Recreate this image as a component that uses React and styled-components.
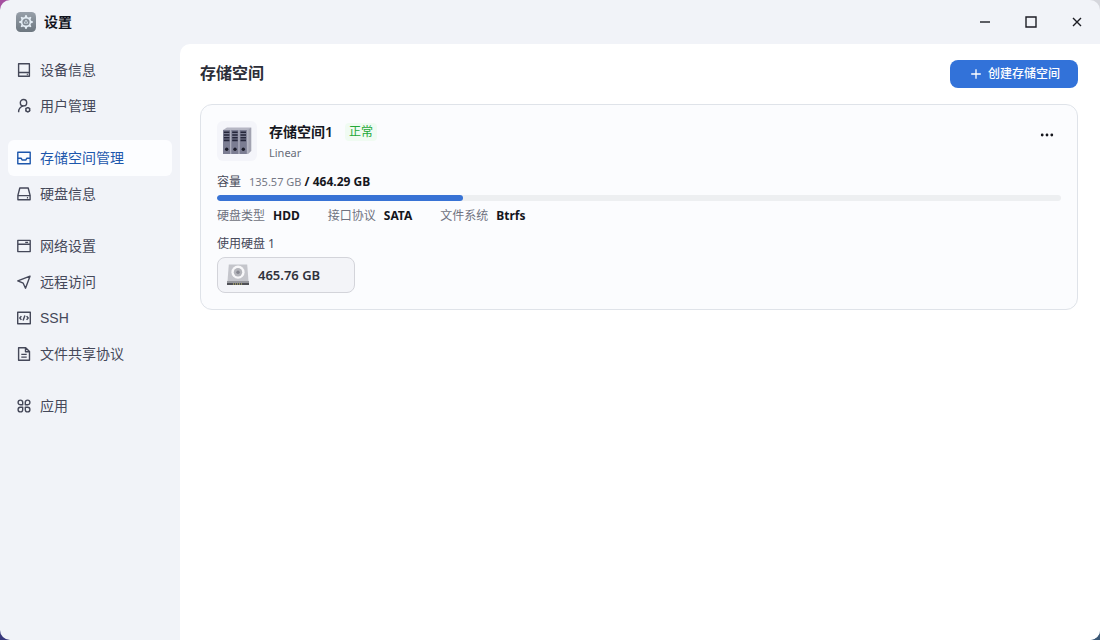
import React from "react";
import styled, { createGlobalStyle } from "styled-components";

const ui = `"Liberation Sans", "Noto Sans CJK SC", sans-serif`;
const latin = `"Noto Sans", "Noto Sans CJK SC", sans-serif`;

const GlobalStyle = createGlobalStyle`
  * { box-sizing: border-box; }
  body { margin: 0; font-family: ${ui}; font-size: 14px; color: #1b1d28; background: #fff; }
  button { font: inherit; color: inherit; border: 0; padding: 0; background: none; cursor: pointer; }
  h1, h2, p, ul, dl, dd { margin: 0; padding: 0; }
`;

const Desktop = styled.div`
  min-height: 100vh;
  display: flex;
  background: linear-gradient(180deg, #a54fa0 0, #a54fa0 20px, #38387c 60px, #38387c 100%) left / 50% 100% no-repeat,
    linear-gradient(180deg, #d5d6dc 0, #d5d6dc 20px, #3b5876 60px, #3b5876 100%);
`;

const Window = styled.div`
  flex: 1;
  display: flex;
  flex-direction: column;
  background: #f1f3f8;
  border-radius: 10px;
  overflow: hidden;
`;

const TitleBar = styled.header`
  height: 44px;
  display: flex;
  align-items: center;
  justify-content: space-between;
  padding-left: 16px;
`;

const AppTitle = styled.h1`
  display: flex;
  align-items: center;
  gap: 8px;
  font-size: 14px;
  line-height: 20px;
  font-weight: 700;
  color: #11131d;
  svg { display: block; }
`;

const WindowControls = styled.div`
  display: flex;
`;

const WindowButton = styled.button`
  width: 46px;
  height: 44px;
  display: grid;
  place-items: center;
  color: #1c1d24;
`;

const Body = styled.div`
  flex: 1;
  display: flex;
`;

const Sidebar = styled.nav`
  width: 180px;
  flex: none;
  padding: 8px;
  display: flex;
  flex-direction: column;
  gap: 16px;
`;

const NavGroup = styled.ul`
  list-style: none;
`;

const NavLink = styled.a`
  height: 36px;
  display: flex;
  align-items: center;
  gap: 8px;
  padding: 0 8px;
  border-radius: 6px;
  font-size: 14px;
  line-height: 20px;
  text-decoration: none;
  color: ${(p) => (p.$active ? "#1d57ac" : "#454859")};
  background: ${(p) => (p.$active ? "#fcfdff" : "transparent")};
`;

const Main = styled.main`
  flex: 1;
  min-width: 0;
  padding: 16px 22px 16px 20px;
  background: #fff;
  border-top-left-radius: 10px;
`;

const PageHead = styled.div`
  display: flex;
  align-items: center;
  justify-content: space-between;
  margin-bottom: 16px;
`;

const PageTitle = styled.h2`
  font-size: 16px;
  line-height: 24px;
  font-weight: 700;
  color: #2c2e38;
`;

const CreateButton = styled.button`
  height: 28px;
  display: flex;
  align-items: center;
  gap: 6px;
  padding: 0 18px 0 20px;
  border-radius: 8px;
  background: #3272d9;
  color: #fff;
  font-size: 12px;
  line-height: 18px;
  font-weight: 500;
`;

const Card = styled.section`
  padding: 16px;
  border: 1px solid #dfe3e9;
  border-radius: 12px;
  background: #fbfcfe;
`;

const CardHead = styled.div`
  display: flex;
  align-items: flex-start;
  gap: 12px;
  margin-bottom: 10px;
`;

const PoolIcon = styled.div`
  width: 40px;
  height: 40px;
  display: grid;
  place-items: center;
  border-radius: 6px;
  background: #f4f5fa;
`;

const PoolText = styled.div`
  flex: 1;
`;

const PoolName = styled.h3`
  margin: 0;
  display: flex;
  align-items: center;
  gap: 12px;
  font-family: ${latin};
  font-size: 14px;
  line-height: 22px;
  font-weight: 600;
  color: #151721;
`;

const Status = styled.span`
  padding: 0 4px;
  border-radius: 4px;
  background: #f0fbf2;
  color: #24a838;
  font-size: 12px;
  line-height: 18px;
  font-weight: 400;
`;

const PoolMode = styled.p`
  font-family: ${latin};
  font-size: 11px;
  line-height: 20px;
  color: #686c78;
`;

const MoreButton = styled.button`
  width: 28px;
  height: 28px;
  display: grid;
  place-items: center;
  color: #15161c;
`;

const InfoLine = styled.p`
  display: flex;
  align-items: center;
  gap: ${(p) => p.$gap || 0}px;
  font-family: ${latin};
  font-size: 12px;
  line-height: 18px;
  color: #454859;
`;

const Used = styled.span`
  font-size: 11px;
  color: #767986;
`;

const Total = styled.strong`
  font-weight: 700;
  color: #15161c;
`;

const Track = styled.div`
  height: 6px;
  margin: 4px 0 6px;
  border-radius: 3px;
  background: #edeff1;
  overflow: hidden;
`;

const Fill = styled.div`
  height: 100%;
  border-radius: 3px;
  background: #3873d5;
`;

const Specs = styled.dl`
  display: flex;
  gap: 28px;
  margin-bottom: 10px;
  font-family: ${latin};
  font-size: 12px;
  line-height: 18px;
`;

const Spec = styled.div`
  display: flex;
  gap: 8px;
  dt { color: #6f7280; }
  dd { font-weight: 700; color: #15161c; }
`;

const Disk = styled.button`
  width: 138px;
  height: 36px;
  margin-top: 4px;
  display: flex;
  align-items: center;
  gap: 8px;
  padding: 0 8px;
  border: 1px solid #d3d4da;
  border-radius: 8px;
  background: #f3f4f8;
  font-family: ${latin};
  font-size: 13px;
  line-height: 20px;
  font-weight: 600;
  color: #30323b;
`;

const glyphs = {
  device: <><path d="M2.6 1.7h10.8v12.6H2.6z" /><path d="M2.6 10.5h10.8M10.8 12.5h1" /></>,
  user: <><circle cx="7.5" cy="4.7" r="3.2" /><path d="M2.6 14.2c0-3.4 1.9-5.6 4.9-6.3" /><circle cx="11.8" cy="11.7" r="1.9" /><path d="M11.8 9v.9M11.8 13.5v.9M9.4 10.3l.8.5M13.4 12.6l.8.5M14.2 10.3l-.8.5M10.2 12.6l-.8.5" /></>,
  storage: <><path d="M1.8 2.3h12.4v11.4H1.8z" /><path d="M1.8 8.2h3.3c.4 0 .6 1.8 1.4 1.8h3c.8 0 1-1.8 1.4-1.8h3.3" /></>,
  disk: <><path d="M3.8 2h8.4l1.9 7.4v4.4H1.9V9.4z" /><path d="M1.9 9.6h12.2M10.9 11.8h1.2" /></>,
  network: <><path d="M1.8 2.4h12.4v11.2H1.8zM1.8 6.3h12.4M9.2 4.4h2.9" /></>,
  remote: <path d="M14 2.2 1.8 6.9l5.4 2.3 2.3 5z" />,
  ssh: <><path d="M1.7 2.3h12.6v11.4H1.7z" /><path d="M5.4 6.1 3.8 8l1.6 1.9M10.6 6.1 12.2 8l-1.6 1.9M8.9 5.4 7.1 10.6" /></>,
  share: <><path d="M2.6 1.8h7.1l3.8 3.8v8.6H2.6zM9.5 1.8v4h4M5.3 8.4h5.4M5.3 11.1h5.4" /></>,
  apps: <path d="M6.7 6.7H4.3a2.3 2.3 0 1 1 2.4-2.4zM9.3 6.7V4.3a2.3 2.3 0 1 1 2.4 2.4zM6.7 9.3v2.4a2.3 2.3 0 1 1-2.4-2.4zM9.3 9.3h2.4a2.3 2.3 0 1 1-2.4 2.4z" />,
};

const Glyph = ({ name }) => (
  <svg width="16" height="16" viewBox="0 0 16 16" fill="none" stroke="currentColor" strokeWidth="1.4" strokeLinejoin="round" aria-hidden="true">
    {glyphs[name]}
  </svg>
);

const teeth = [0, 45, 90, 135, 180, 225, 270, 315];

const SettingsLogo = () => (
  <svg width="20" height="20" viewBox="0 0 20 20" aria-hidden="true">
    <defs>
      <linearGradient id="logo" x1="0" y1="0" x2="0" y2="1">
        <stop offset="0" stopColor="#98a0aa" />
        <stop offset="1" stopColor="#6d7780" />
      </linearGradient>
    </defs>
    <rect width="20" height="20" rx="4.5" fill="url(#logo)" />
    <circle cx="10" cy="10" r="4.4" fill="none" stroke="#e4edf5" strokeWidth="1.6" />
    {teeth.map((a) => (
      <path key={a} d="M8.6 5.3 9.4 3h1.2l.8 2.3z" fill="#e4edf5" transform={`rotate(${a} 10 10)`} />
    ))}
    <path d="M10 8 11.9 11.2H8.1z" fill="none" stroke="#cfdae3" strokeWidth=".9" />
  </svg>
);

const ServerRack = () => (
  <svg width="32" height="30" viewBox="0 0 32 30" aria-hidden="true">
    <path d="M2 4 6 1.5h24L29 26l-2 2H2z" fill="#b5b6c3" />
    <path d="m26.5 4 3.8-2.5V25l-3.8 3z" fill="#a2a3b1" />
    {[2, 10.3, 18.6].map((x) => (
      <g key={x} transform={`translate(${x} 0)`}>
        <path d="M0 4h7.3v24H0z" fill="#7b7d92" />
        <path d="M7.3 4 9 2.4V27l-1.7 1z" fill="#b3b4c2" />
        <path d="M.9 6.3h5.5M.9 9h5.5M.9 11.7h5.5M.9 14.4h5.5" stroke="#24263a" strokeWidth="1.6" />
        <circle cx="3.7" cy="23.3" r="1.7" fill="#1b1c2a" />
      </g>
    ))}
  </svg>
);

const HardDrive = () => (
  <svg width="24" height="24" viewBox="0 0 24 24" aria-hidden="true">
    <path d="M2.8 1.5h18.4L22.5 18h-21z" fill="#c4c5cb" />
    <path d="M1 18h22v2.5H1z" fill="#96979d" />
    <path d="M1 20h22v2H1z" fill="#4f5056" />
    <path d="M7 21h10" stroke="#aaa66f" strokeWidth="1.5" strokeDasharray="1 1" />
    <circle cx="12" cy="9.2" r="6.6" fill="#f7f7f9" />
    <circle cx="12" cy="9.2" r="4.2" fill="#b4b5bb" />
    <circle cx="12" cy="9.2" r="1.7" fill="#85868f" />
  </svg>
);

const groups = [
  [["device", "设备信息"], ["user", "用户管理"]],
  [["storage", "存储空间管理"], ["disk", "硬盘信息"]],
  [["network", "网络设置"], ["remote", "远程访问"], ["ssh", "SSH"], ["share", "文件共享协议"]],
  [["apps", "应用"]],
];

const specs = [["硬盘类型", "HDD"], ["接口协议", "SATA"], ["文件系统", "Btrfs"]];

const pool = { used: 135.57, total: 464.29 };

export default function App() {
  return (
    <>
      <GlobalStyle />
      <Desktop>
        <Window>
          <TitleBar>
            <AppTitle><SettingsLogo />设置</AppTitle>
            <WindowControls>
              <WindowButton aria-label="最小化">
                <svg width="12" height="12" fill="none" stroke="currentColor" strokeWidth="1.4"><path d="M1 6h10" /></svg>
              </WindowButton>
              <WindowButton aria-label="最大化">
                <svg width="12" height="12" fill="none" stroke="currentColor" strokeWidth="1.4"><path d="M1 1h10v10H1z" /></svg>
              </WindowButton>
              <WindowButton aria-label="关闭">
                <svg width="12" height="12" fill="none" stroke="currentColor" strokeWidth="1.4"><path d="m2 2 8 8M10 2l-8 8" /></svg>
              </WindowButton>
            </WindowControls>
          </TitleBar>
          <Body>
            <Sidebar aria-label="设置">
              {groups.map((items) => (
                <NavGroup key={items[0][0]}>
                  {items.map(([icon, label]) => (
                    <li key={icon}>
                      <NavLink href={`#${icon}`} $active={icon === "storage"} aria-current={icon === "storage" ? "page" : undefined}>
                        <Glyph name={icon} />
                        {label}
                      </NavLink>
                    </li>
                  ))}
                </NavGroup>
              ))}
            </Sidebar>
            <Main>
              <PageHead>
                <PageTitle>存储空间</PageTitle>
                <CreateButton>
                  <svg width="12" height="12" fill="none" stroke="currentColor" strokeWidth="1.3" aria-hidden="true"><path d="M6 1.2v9.6M1.2 6h9.6" /></svg>
                  创建存储空间
                </CreateButton>
              </PageHead>
              <Card>
                <CardHead>
                  <PoolIcon><ServerRack /></PoolIcon>
                  <PoolText>
                    <PoolName>存储空间1<Status>正常</Status></PoolName>
                    <PoolMode>Linear</PoolMode>
                  </PoolText>
                  <MoreButton aria-label="更多">
                    <svg width="14" height="4" fill="currentColor"><circle cx="2.2" cy="2" r="1.4" /><circle cx="7" cy="2" r="1.4" /><circle cx="11.8" cy="2" r="1.4" /></svg>
                  </MoreButton>
                </CardHead>
                <InfoLine $gap={8}>
                  容量
                  <span><Used>{pool.used} GB</Used> <Total>/ {pool.total} GB</Total></span>
                </InfoLine>
                <Track><Fill style={{ width: `${(pool.used / pool.total) * 100}%` }} /></Track>
                <Specs>
                  {specs.map(([name, value]) => (
                    <Spec key={name}><dt>{name}</dt><dd>{value}</dd></Spec>
                  ))}
                </Specs>
                <InfoLine>使用硬盘 1</InfoLine>
                <Disk><HardDrive />465.76 GB</Disk>
              </Card>
            </Main>
          </Body>
        </Window>
      </Desktop>
    </>
  );
}
